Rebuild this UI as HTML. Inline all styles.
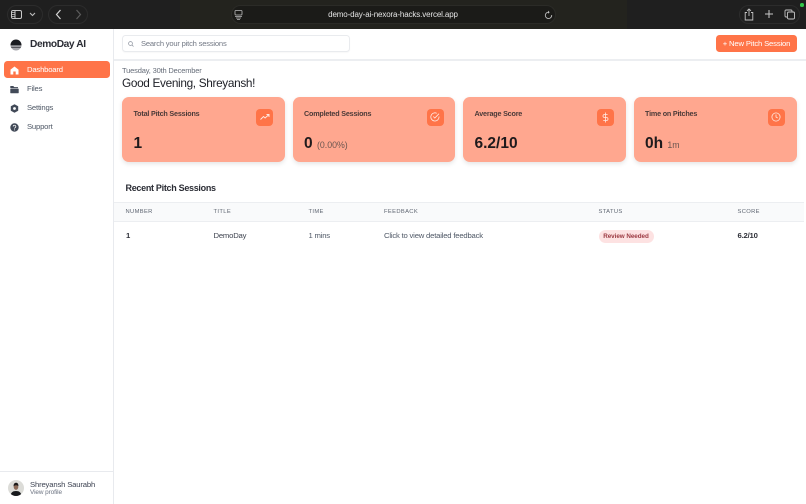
<!DOCTYPE html>
<html>
<head>
<meta charset="utf-8">
<style>
*{box-sizing:border-box;margin:0;padding:0}
html,body{width:806px;height:504px;overflow:hidden;background:#fff;font-family:"Liberation Sans",sans-serif}
#w{position:absolute;left:0;top:0;width:806px;height:504px;overflow:hidden;filter:blur(.3px)}
.a{position:absolute;white-space:nowrap}
svg{position:absolute;display:block;fill:none}
.card{position:absolute;top:97px;width:162.500px;height:65px;background:#ffa78f;border-radius:7px;box-shadow:0 2px 5px rgba(0,0,0,.1)}
.card .t{position:absolute;left:11.500px;top:12.500px;font-size:7.200px;line-height:8px;font-weight:bold;letter-spacing:-.19px;color:#4b3a38;white-space:nowrap}
.card .v{position:absolute;left:11.500px;top:38px;font-size:15.500px;font-weight:bold;color:#1f1a1c;white-space:nowrap;line-height:18px}
.card .v span{font-size:8.800px;font-weight:normal;color:#6b5650}
.card .i{position:absolute;left:134px;top:11.500px;width:17px;height:17px;background:#ff7448;border-radius:4px}
.th{position:absolute;top:209px;font-size:5.800px;letter-spacing:.35px;color:#5f6672;white-space:nowrap;line-height:7px}
.td{position:absolute;top:232px;font-size:7.700px;letter-spacing:-.2px;color:#4f5866;white-space:nowrap;line-height:8px}
.nav{position:absolute;left:27px;font-size:7.700px;letter-spacing:-.2px;color:#4f5866;line-height:8px;white-space:nowrap}
</style>
</head>
<body>
<div id="w">
<!-- browser toolbar -->
<div class="a" style="left:0;top:0;width:806px;height:29px;background:#1f1f1f"></div>
<div class="a" style="left:180px;top:0;width:447px;height:29px;background:#23231e"></div>
<div class="a" style="left:7px;top:5px;width:36px;height:19px;border:1px solid #2c2c2c;border-radius:10px"></div>
<div class="a" style="left:48px;top:5px;width:40px;height:19px;border:1px solid #2c2c2c;border-radius:10px"></div>
<div class="a" style="left:231px;top:5px;width:325px;height:19px;background:#1b1b18;border:1px solid #2b2b27;border-radius:10px"></div>
<div class="a" style="left:739px;top:5px;width:61px;height:19px;border:1px solid #2c2c2c;border-radius:10px"></div>
<svg style="left:11px;top:9px" width="11" height="11" viewBox="0 0 11 11" stroke="#c9c9c9" stroke-width="1"><rect x=".5" y="1.500" width="10" height="8" rx="1.500"/><path d="M4 1.500v8"/><path d="M1 3.500h3M1 5.500h3M1 7.500h3" stroke-width=".7"/></svg>
<svg style="left:29px;top:12px" width="7" height="5" viewBox="0 0 7 5" stroke="#bdbdbd" stroke-width="1.100"><path d="M1 1l2.500 2.500L6 1"/></svg>
<svg style="left:55px;top:9px" width="7" height="11" viewBox="0 0 7 11" stroke="#d4d4d4" stroke-width="1.200"><path d="M5.500 1L1.500 5.500l4 4.500"/></svg>
<svg style="left:75px;top:9px" width="7" height="11" viewBox="0 0 7 11" stroke="#5c5c5c" stroke-width="1.200"><path d="M1.500 1l4 4.500-4 4.500"/></svg>
<svg style="left:234px;top:10px" width="9" height="10" viewBox="0 0 9 10" stroke="#bdbdbd" stroke-width=".8"><rect x="1" y=".5" width="7" height="4.500" rx=".8"/><path d="M1 6.500h7M2 8h5M3 9.500h3"/></svg>
<div class="a" style="left:231px;top:10px;width:325px;text-align:center;font-size:8px;letter-spacing:-.13px;line-height:10px;color:#e4e4e4;padding-right:1px">demo-day-ai-nexora-hacks.vercel.app</div>
<svg style="left:544px;top:10px" width="9" height="10" viewBox="0 0 9 10" stroke="#bdbdbd" stroke-width=".9"><path d="M5 2.200A3.200 3.200 0 1 0 7.700 5"/><path d="M4 .6L5.700 2.200 4 3.800" fill="#bdbdbd" stroke="none"/></svg>
<svg style="left:744px;top:8px" width="10" height="13" viewBox="0 0 10 13" stroke="#c4c4c4" stroke-width=".9"><path d="M3 4.500H1.200v7.500h7.600V4.500H7M5 8V1M3 2.800L5 1l2 1.800"/></svg>
<svg style="left:764px;top:9px" width="10" height="10" viewBox="0 0 10 10" stroke="#c9c9c9" stroke-width="1"><path d="M5 1v8M1 5h8"/></svg>
<svg style="left:784px;top:9px" width="11" height="11" viewBox="0 0 11 11" stroke="#c4c4c4" stroke-width=".9"><rect x="3.500" y="3" width="7" height="7" rx="1.200"/><path d="M3 8H2a1 1 0 0 1-1-1V2a1 1 0 0 1 1-1h5a1 1 0 0 1 1 1v.8"/></svg>
<div class="a" style="left:800px;top:3px;width:3.500px;height:3.500px;border-radius:50%;background:#34c84a"></div>

<!-- sidebar -->
<div class="a" style="left:0;top:29px;width:114px;height:475px;background:#fff;border-right:1px solid #e8eaee"></div>
<svg style="left:9.500px;top:38.500px" width="12" height="12" viewBox="0 0 12 12"><defs><clipPath id="c"><circle cx="6" cy="6" r="5.500"/></clipPath></defs><g clip-path="url(#c)"><rect width="12" height="6.400" fill="#1b1d22"/><rect y="6.400" width="12" height="1.600" fill="#9a9aa0"/><rect y="8" width="12" height="1.100" fill="#55565c"/><rect y="9.100" width="12" height="3" fill="#a5a5aa"/></g></svg>
<div class="a" style="left:30px;top:37.500px;font-size:10.200px;letter-spacing:-.4px;font-weight:bold;color:#2a2c34;line-height:13px">DemoDay AI</div>
<div class="a" style="left:4px;top:61px;width:106px;height:17px;background:#ff7448;border-radius:3.500px"></div>
<svg style="left:10px;top:65.500px" width="9" height="9" viewBox="0 0 9 9"><path d="M4.500.5L8.500 3.600V8.500H.5V3.600z" fill="#fff"/><rect x="3.300" y="5.500" width="2.400" height="3" fill="#ff7448"/></svg>
<div class="nav" style="top:66px;color:#fff">Dashboard</div>
<svg style="left:10px;top:84.500px" width="9" height="9" viewBox="0 0 9 9"><path d="M.3 1h3l1 1.100H8v1H.3z" fill="#424a58"/><rect x=".3" y="3.600" width="8.400" height="4.600" rx=".6" fill="#424a58"/></svg>
<div class="nav" style="top:85px">Files</div>
<svg style="left:10px;top:103.500px" width="9" height="9" viewBox="0 0 9 9"><path d="M4.500.2L8.200 2.300v4.400L4.500 8.800.8 6.700V2.300z" fill="#424a58"/><circle cx="4.500" cy="4.500" r="1.400" fill="#fff"/></svg>
<div class="nav" style="top:104px">Settings</div>
<svg style="left:10px;top:122.500px" width="9" height="9" viewBox="0 0 9 9"><circle cx="4.500" cy="4.500" r="4.200" fill="#424a58"/><path d="M3.200 3.500a1.300 1.300 0 1 1 1.900 1.200c-.4.2-.6.5-.6.9" stroke="#fff" stroke-width=".8"/><circle cx="4.500" cy="6.900" r=".5" fill="#fff"/></svg>
<div class="nav" style="top:123px">Support</div>
<div class="a" style="left:0;top:471px;width:113px;height:1px;background:#e8eaee"></div>
<svg style="left:8px;top:480px" width="16" height="16" viewBox="0 0 16 16"><defs><clipPath id="p"><circle cx="8" cy="8" r="8"/></clipPath></defs><g clip-path="url(#p)"><rect width="16" height="16" fill="#dcdcd8"/><path d="M2.500 16c.3-3.400 2.200-5 5.500-5s5.200 1.600 5.500 5z" fill="#16181b"/><ellipse cx="8" cy="7" rx="2.300" ry="2.900" fill="#8c6a58"/><path d="M5.600 6.500c-.2-2.500 1-3.700 2.500-3.700s2.500 1.200 2.300 3.500c-1-1.300-3.500-1.500-4.800.2z" fill="#1c1a1a"/></g></svg>
<div class="a" style="left:30px;top:479.500px;font-size:7.700px;letter-spacing:-.17px;line-height:9px;color:#3f4554">Shreyansh Saurabh</div>
<div class="a" style="left:30px;top:488.500px;font-size:6.400px;letter-spacing:-.08px;line-height:8px;color:#6b7280">View profile</div>

<!-- top bar -->
<div class="a" style="left:114px;top:59px;width:692px;height:1.500px;background:#eceef1"></div>
<div class="a" style="left:122px;top:35px;width:228px;height:17px;background:#fff;border:1px solid #e9ebee;border-radius:3.500px;box-shadow:0 1px 1px rgba(0,0,0,.03)"></div>
<svg style="left:128px;top:40.500px" width="6" height="6" viewBox="0 0 6 6" stroke="#8a909c" stroke-width=".7"><circle cx="2.500" cy="2.500" r="1.900"/><path d="M4 4l1.500 1.500"/></svg>
<div class="a" style="left:141px;top:39.500px;font-size:7.600px;letter-spacing:-.2px;line-height:8px;color:#737985">Search your pitch sessions</div>
<div class="a" style="left:716px;top:35px;width:81px;height:17px;background:#ff7448;border-radius:3.500px;color:#fff;font-size:7.700px;letter-spacing:-.17px;line-height:17px;text-align:center">+ New Pitch Session</div>

<!-- heading -->
<div class="a" style="left:122px;top:66.500px;font-size:7.500px;letter-spacing:-.17px;line-height:8px;color:#666d79">Tuesday, 30th December</div>
<div class="a" style="left:122px;top:75.500px;font-size:11.800px;letter-spacing:-.33px;line-height:14px;color:#1d1f26">Good Evening, Shreyansh!</div>

<!-- cards -->
<div class="card" style="left:122px">
  <div class="t">Total Pitch Sessions</div><div class="v">1</div>
  <div class="i"><svg style="left:3.500px;top:4.500px" width="10" height="8" viewBox="0 0 10 8" stroke="#fff" stroke-opacity=".85" stroke-width=".9"><path d="M.5 6.500l3-3 1.600 1.500L9 1.500M6.500 1.500H9V4"/></svg></div>
</div>
<div class="card" style="left:292.500px">
  <div class="t">Completed Sessions</div><div class="v">0 <span>(0.00%)</span></div>
  <div class="i"><svg style="left:3.500px;top:3.500px" width="10" height="10" viewBox="0 0 10 10" stroke="#fff" stroke-opacity=".85" stroke-width=".8"><path d="M9 4.500A4.100 4.100 0 1 1 6.800 1.300"/><path d="M3.300 4.500l1.500 1.500L9 1.700"/></svg></div>
</div>
<div class="card" style="left:463px">
  <div class="t">Average Score</div><div class="v">6.2/10</div>
  <div class="i"><svg style="left:5px;top:3px" width="7" height="11" viewBox="0 0 7 11" stroke="#fff" stroke-opacity=".85" stroke-width=".8"><path d="M3.500.5v10M5.600 2.500H2.500a1.500 1.500 0 0 0 0 3h2a1.500 1.500 0 0 1 0 3H1.200"/></svg></div>
</div>
<div class="card" style="left:633.500px;width:163.500px">
  <div class="t">Time on Pitches</div><div class="v">0h <span>1m</span></div>
  <div class="i"><svg style="left:3.500px;top:3.500px" width="10" height="10" viewBox="0 0 10 10" stroke="#fff" stroke-opacity=".85" stroke-width=".8"><circle cx="5" cy="5" r="4.100"/><path d="M5 2.500V5l1.700 1"/></svg></div>
</div>

<!-- table -->
<div class="a" style="left:125.500px;top:182px;font-size:9px;letter-spacing:-.3px;font-weight:bold;line-height:12px;color:#2a2c34">Recent Pitch Sessions</div>
<div class="a" style="left:114px;top:202px;width:690px;height:20px;background:#f9fafb;border-top:1px solid #eceef1;border-bottom:1px solid #eceef1"></div>
<div class="th" style="left:125.500px">NUMBER</div>
<div class="th" style="left:213.500px">TITLE</div>
<div class="th" style="left:308.500px">TIME</div>
<div class="th" style="left:384px">FEEDBACK</div>
<div class="th" style="left:598.500px">STATUS</div>
<div class="th" style="left:737.500px">SCORE</div>
<div class="td" style="left:126px;font-weight:bold;color:#2e3038">1</div>
<div class="td" style="left:213.500px;color:#3f4450">DemoDay</div>
<div class="td" style="left:308.500px">1 mins</div>
<div class="td" style="left:384px">Click to view detailed feedback</div>
<div class="a" style="left:598.500px;top:229.500px;width:55px;height:13px;background:#fde2e2;border-radius:7px;text-align:center;font-size:6.300px;letter-spacing:-.05px;font-weight:bold;line-height:13px;color:#9c3a42">Review Needed</div>
<div class="td" style="left:737.500px;font-weight:bold;color:#2e3038">6.2/10</div>
</div>
</body>
</html>
